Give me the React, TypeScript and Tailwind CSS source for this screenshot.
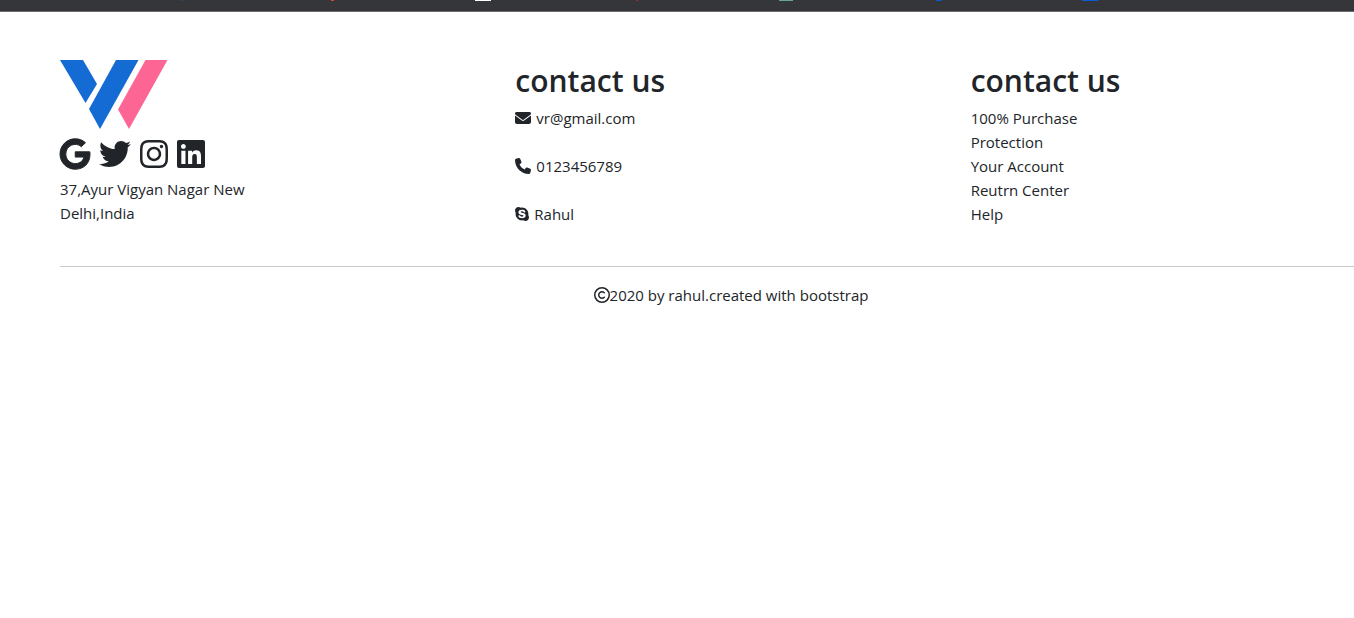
import type { ReactNode } from "react";
import {
  FaEnvelope,
  FaGoogle,
  FaInstagram,
  FaLinkedin,
  FaPhone,
  FaRegCopyright,
  FaSkype,
  FaTwitter,
} from "react-icons/fa6";

function BrowserEdge() {
  return (
    <div className="h-3 border-b border-[#6b6b6d] bg-[#35363a]">
      <svg className="block h-px w-full" aria-hidden="true">
        <rect x="178" width="6" height="1" fill="#2f4254" />
        <rect x="331" width="3" height="1" fill="#d84a35" />
        <rect x="475" width="16" height="1" fill="#ffffff" />
        <rect x="636" width="2" height="1" fill="#b3262b" />
        <rect x="779" width="14" height="1" fill="#68a596" />
        <rect x="936" width="6" height="1" fill="#0b57d0" />
        <rect x="1082" width="16" height="1" fill="#0b5cd8" />
      </svg>
    </div>
  );
}

function Logo() {
  return (
    <svg className="block h-[70px] w-[108px]" viewBox="0 0 108 70" role="img" aria-label="Logo">
      <path d="M0 0H23L37 24L25.500 43Z" fill="#146bd4" />
      <path d="M56 0H78.500L40 69L29 49Z" fill="#146bd4" />
      <path d="M85.500 0H107.500L69 69L58 49.500Z" fill="#fd6694" />
    </svg>
  );
}

const socials = [
  { label: "Google", icon: <FaGoogle strokeWidth={16} className="h-8 w-[30px] overflow-visible" /> },
  { label: "Twitter", icon: <FaTwitter className="size-8" /> },
  { label: "Instagram", icon: <FaInstagram className="h-8 w-7" /> },
  { label: "LinkedIn", icon: <FaLinkedin className="h-8 w-7" /> },
];

function Column({ title, children }: { title?: string; children: ReactNode }) {
  return (
    <div className="w-1/3 px-3">
      {title && <h2 className="mb-1 text-[30px] leading-[42px] font-semibold">{title}</h2>}
      {children}
    </div>
  );
}

export default function App() {
  return (
    <div className="overflow-hidden bg-white font-['Open_Sans','Noto_Sans',sans-serif] text-[15px] leading-6 text-[#212529]">
      <BrowserEdge />
      <footer className="-mr-15 ml-12 pt-12">
        <div className="flex">
          <Column>
            <Logo />
            <div className="mt-2 mb-[7px] flex gap-[9px]">
              {socials.map((s) => (
                <a key={s.label} href="#" aria-label={s.label}>
                  {s.icon}
                </a>
              ))}
            </div>
            <p>
              37,Ayur Vigyan Nagar New
              <br />
              Delhi,India
            </p>
          </Column>
          <Column title="contact us">
            <ul className="flex flex-col gap-6">
              <li className="flex items-center gap-[5px]">
                <FaEnvelope className="size-4" />
                vr@gmail.com
              </li>
              <li className="flex items-center gap-[5px]">
                <FaPhone className="size-4" />
                0123456789
              </li>
              <li className="flex items-center gap-[5px]">
                <FaSkype className="h-4 w-[14px]" />
                Rahul
              </li>
            </ul>
          </Column>
          <Column title="contact us">
            <ul>
              <li>
                100% Purchase
                <br />
                Protection
              </li>
              <li>Your Account</li>
              <li>Reutrn Center</li>
              <li>Help</li>
            </ul>
          </Column>
        </div>
        <div className="px-3 pt-10">
          <hr className="mb-4 border-[#c8c9ca]" />
          <p className="flex items-center justify-center">
            <FaRegCopyright className="size-4" />
            2020 by rahul.created with bootstrap
          </p>
        </div>
      </footer>
    </div>
  );
}
